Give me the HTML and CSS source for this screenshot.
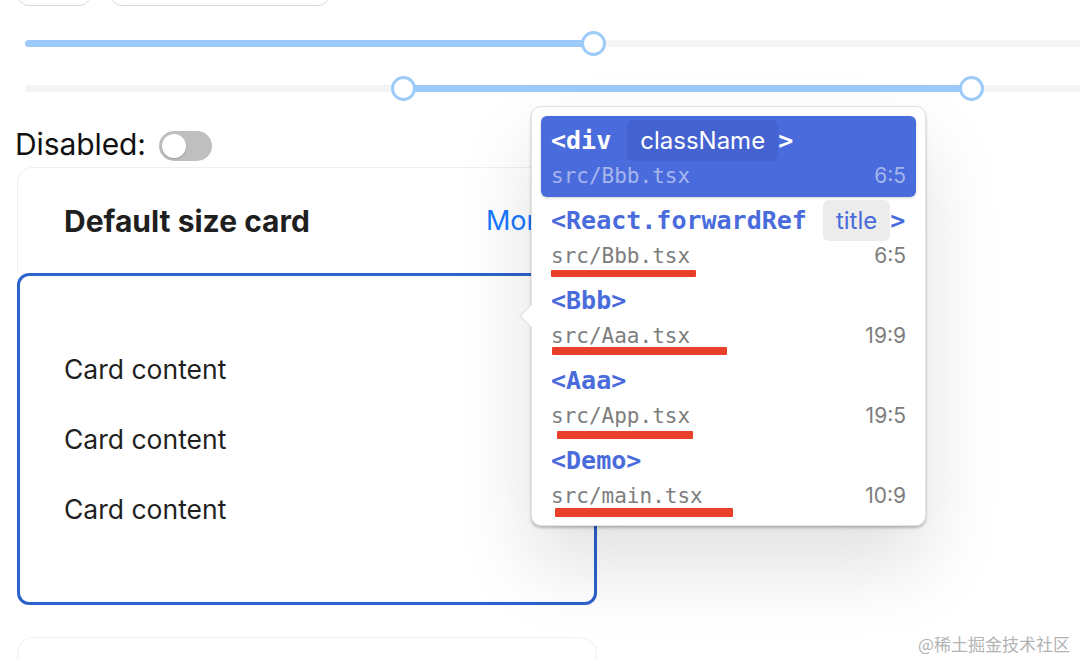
FILE: index.html
```html
<!DOCTYPE html>
<html lang="en">
<head>
<meta charset="utf-8">
<title>Inspector popover</title>
<link rel="stylesheet" href="styles.css">
</head>
<body>
<div class="page">
  <div class="btn-row">
    <div class="btn btn-small"></div>
    <div class="btn btn-wide"></div>
  </div>

  <div class="slider slider-one">
    <div class="rail"></div>
    <div class="track" style="left:0px;width:568px"></div>
    <div class="handle" style="left:568px"></div>
  </div>

  <div class="slider slider-two">
    <div class="rail"></div>
    <div class="track" style="left:378px;width:568px"></div>
    <div class="handle" style="left:378px"></div>
    <div class="handle" style="left:946px"></div>
  </div>

  <div class="disabled-row">
    <span class="disabled-label">Disabled:</span>
    <span class="switch"><span class="switch-knob"></span></span>
  </div>

  <div class="card">
    <div class="card-head">
      <span class="card-title">Default size card</span>
      <span class="card-extra">More</span>
    </div>
    <div class="card-body">
      <p class="card-line">Card content</p>
      <p class="card-line">Card content</p>
      <p class="card-line">Card content</p>
    </div>
  </div>

  <div class="card card-next"></div>

  <div class="popover">
    <div class="item item-active">
      <div class="name-row">
        <span class="tag">&lt;div</span>
        <span class="chip">className</span>
        <span class="tag">&gt;</span>
      </div>
      <div class="file-row">
        <span class="file">src/Bbb.tsx</span>
        <span class="pos">6:5</span>
      </div>
    </div>
    <div class="item">
      <div class="name-row">
        <span class="tag">&lt;React.forwardRef</span>
        <span class="chip">title</span>
        <span class="tag">&gt;</span>
      </div>
      <div class="file-row">
        <span class="file">src/Bbb.tsx</span>
        <span class="pos">6:5</span>
      </div>
      <span class="mark mark-a"></span>
    </div>
    <div class="item">
      <div class="name-row">
        <span class="tag">&lt;Bbb&gt;</span>
      </div>
      <div class="file-row">
        <span class="file">src/Aaa.tsx</span>
        <span class="pos">19:9</span>
      </div>
      <span class="mark mark-b"></span>
    </div>
    <div class="item">
      <div class="name-row">
        <span class="tag">&lt;Aaa&gt;</span>
      </div>
      <div class="file-row">
        <span class="file">src/App.tsx</span>
        <span class="pos">19:5</span>
      </div>
      <span class="mark mark-c"></span>
    </div>
    <div class="item">
      <div class="name-row">
        <span class="tag">&lt;Demo&gt;</span>
      </div>
      <div class="file-row">
        <span class="file">src/main.tsx</span>
        <span class="pos">10:9</span>
      </div>
      <span class="mark mark-d"></span>
    </div>
  </div>

  <div class="watermark">@稀土掘金技术社区</div>
</div>
</body>
</html>
```

FILE: styles.css
```css
* { box-sizing: border-box; }

html, body {
  margin: 0;
  padding: 0;
  background: #ffffff;
  overflow: hidden;
  width: 1080px;
  height: 659px;
}

body {
  font-family: Inter, "Noto Sans", "Liberation Sans", sans-serif;
  color: #1f1f1f;
}

.page {
  position: relative;
  width: 1080px;
  height: 659px;
  overflow: hidden;
}

/* top buttons (cut off) */
.btn-row {
  display: flex;
  gap: 19px;
  margin-top: -34px;
  padding-left: 17px;
}
.btn {
  height: 40px;
  border: 1.5px solid #d9d9d9;
  border-radius: 12px;
  background: #fff;
}
.btn-small { width: 74px; }
.btn-wide { width: 220px; }

/* sliders */
.slider {
  position: relative;
  margin-left: 25px;
  width: 1070px;
  height: 26px;
}
.slider-one { margin-top: 24px; }
.slider-two { margin-top: 19px; }

.rail {
  position: absolute;
  left: 0;
  right: 0;
  top: 9.5px;
  height: 7px;
  border-radius: 4px;
  background: #f4f4f4;
}
.track {
  position: absolute;
  top: 9.5px;
  height: 7px;
  border-radius: 4px;
  background: #9dcbf9;
}
.handle {
  position: absolute;
  top: 0.5px;
  width: 25px;
  height: 25px;
  margin-left: -12.5px;
  border-radius: 50%;
  background: #ffffff;
  border: 3px solid #9dcbf9;
}

/* disabled switch row */
.disabled-row {
  display: flex;
  align-items: center;
  height: 36px;
  margin-top: 26px;
  padding-left: 15px;
}
.disabled-label {
  font-size: 30px;
  color: #111;
  letter-spacing: -0.1px;
  margin-top: -3px;
}
.switch {
  display: inline-flex;
  align-items: center;
  width: 53px;
  height: 30px;
  margin-left: 13px;
  margin-top: 2px;
  padding-left: 3px;
  border-radius: 15px;
  background: #bfbfbf;
}
.switch-knob {
  width: 24px;
  height: 24px;
  border-radius: 50%;
  background: #ffffff;
  box-shadow: 0 1px 2px rgba(0, 0, 0, 0.2);
}

/* card */
.card {
  margin-left: 17px;
  margin-top: 4px;
  width: 580px;
}
.card-head {
  height: 106px;
  display: flex;
  align-items: center;
  justify-content: space-between;
  padding: 0 44px 0 46px;
  border: 1.5px solid #f0f0f0;
  border-bottom: none;
  border-radius: 16px 16px 0 0;
}
.card-title {
  font-size: 30px;
  font-weight: 700;
  color: #1f1f1f;
}
.card-extra {
  font-size: 27px;
  color: #1677ff;
}
.card-body {
  border: 3px solid #2c62cc;
  border-radius: 12px;
  padding: 58px 44px;
}
.card-line {
  margin: 0;
  height: 70px;
  line-height: 70px;
  font-size: 26.5px;
  color: #1f1f1f;
}

.card-next {
  margin-top: 32px;
  height: 100px;
  border: 1.5px solid #f0f0f0;
  border-radius: 16px;
}

/* popover */
.popover {
  position: absolute;
  left: 531px;
  top: 106px;
  width: 395px;
  padding: 9px 9px 9px 9px;
  background: #ffffff;
  border: 1px solid #e2e2e2;
  border-radius: 10px;
  box-shadow: 0 2px 3px rgba(0, 0, 0, 0.25), 0 40px 80px rgba(0, 0, 0, 0.12);
}
.popover::before {
  content: "";
  position: absolute;
  left: -9px;
  top: 200px;
  width: 17px;
  height: 17px;
  background: #ffffff;
  border-left: 1px solid #dcdcdc;
  border-bottom: 1px solid #dcdcdc;
  transform: rotate(45deg);
}

.item {
  position: relative;
  height: 80px;
  padding: 4px 10px 4px 10px;
  border-radius: 6px;
}
.item-active {
  background: #4a6bdb;
  height: 81px;
  margin-bottom: -1px;
  box-shadow: 0 1px 3px rgba(0, 0, 0, 0.18);
}

.name-row {
  display: flex;
  align-items: center;
  height: 40px;
}
.tag {
  font-family: "DejaVu Sans Mono", "Liberation Mono", monospace;
  font-weight: 700;
  font-size: 25px;
  color: #4a6bdb;
  white-space: pre;
}
.item-active .tag { color: #ffffff; }

.chip {
  display: inline-flex;
  align-items: center;
  height: 41px;
  margin-left: 16px;
  padding: 0 13px;
  border-radius: 6px;
  font-size: 24px;
  background: #ececec;
  color: #4a6bdb;
}
.item-active .chip {
  background: #4462d0;
  color: #ffffff;
}

.file-row {
  display: flex;
  justify-content: space-between;
  align-items: baseline;
  height: 32px;
  line-height: 31px;
}
.file {
  font-family: "DejaVu Sans Mono", "Liberation Mono", monospace;
  font-size: 21px;
  color: #7d7d7d;
}
.pos {
  font-size: 21px;
  color: #7d7d7d;
}
.item-active .file,
.item-active .pos {
  color: #a6b6ee;
}

/* hand drawn red underlines */
.mark {
  position: absolute;
  background: #e8402a;
  border-radius: 1px;
}
.mark-a { left: 10px; top: 74px; width: 145px; height: 7px; }
.mark-b { left: 11px; top: 71px; width: 175px; height: 8px; }
.mark-c { left: 16px; top: 75px; width: 136px; height: 8px; }
.mark-d { left: 14px; top: 72px; width: 178px; height: 9px; }

.watermark {
  position: absolute;
  left: 918px;
  top: 631px;
  font-family: "Noto Sans CJK SC", "Noto Sans", sans-serif;
  font-size: 17px;
  color: #b3b3b3;
  white-space: nowrap;
}
```
